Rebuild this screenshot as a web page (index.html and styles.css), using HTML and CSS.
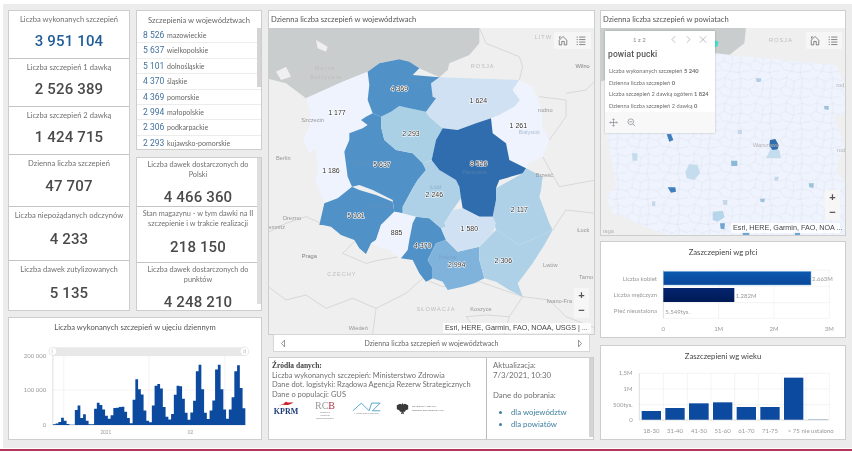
FILE: index.html
```html
<!DOCTYPE html>
<html lang="pl">
<head>
<meta charset="utf-8">
<title>Szczepienia</title>
<link rel="stylesheet" href="styles.css">
</head>
<body>
<main class="frame">
  <section class="leftblock">
    <div class="kpis">
      <div class="kpi h48"><h3>Liczba wykonanych szczepień</h3><strong class="blue">3 951 104</strong></div>
      <div class="kpi h49"><h3>Liczba szczepień 1 dawką</h3><strong>2 526 389</strong></div>
      <div class="kpi h48"><h3>Liczba szczepień 2 dawką</h3><strong>1 424 715</strong></div>
      <div class="kpi h52"><h3>Dzienna liczba szczepień</h3><strong>47 707</strong></div>
      <div class="kpi h55"><h3>Liczba niepożądanych odczynów</h3><strong>4 233</strong></div>
      <div class="kpi h49 last"><h3>Liczba dawek zutylizowanych</h3><strong>5 135</strong></div>
    </div>
    <div class="midcol">
      <div class="panel listpanel">
        <h3 class="listtitle">Szczepienia w województwach</h3>
        <ul class="vlist">
          <li><b>8 526</b> mazowieckie</li>
          <li><b>5 637</b> wielkopolskie</li>
          <li><b>5 101</b> dolnośląskie</li>
          <li><b>4 370</b> śląskie</li>
          <li><b>4 369</b> pomorskie</li>
          <li><b>2 994</b> małopolskie</li>
          <li><b>2 306</b> podkarpackie</li>
          <li><b>2 293</b> kujawsko-pomorskie</li>
        </ul>
        <span class="sbar listbar"></span>
      </div>
      <div class="panel supply">
        <div class="sitem s50"><h3>Liczba dawek dostarczonych do Polski</h3><strong>4 466 360</strong></div>
        <div class="sitem s56"><h3>Stan magazynu - w tym dawki na II szczepienie i w trakcie realizacji</h3><strong>218 150</strong></div>
        <div class="sitem s48"><h3>Liczba dawek dostarczonych do punktów</h3><strong>4 248 210</strong></div>
        <span class="sbar supplybar"></span>
      </div>
    </div>
    <div class="panel daily">
      <h3 class="charttitle">Liczba wykonanych szczepień w ujęciu dziennym</h3>
      <svg class="chart" viewBox="27 78 753 309" aria-label="Wykres dzienny">
        <line x1="157" y1="137" x2="735" y2="137" class="grid"/>
        <line x1="157" y1="240" x2="735" y2="240" class="grid"/>
        <line x1="190" y1="137" x2="190" y2="345" class="grid"/>
        <line x1="445" y1="137" x2="445" y2="345" class="grid"/>
        <line x1="673" y1="137" x2="673" y2="345" class="grid"/>
        <line x1="157" y1="137" x2="157" y2="345" class="axis"/>
        <line x1="157" y1="345" x2="735" y2="345" class="axis"/>
        <rect x="157" y="112" width="576" height="26" class="slider"/>
        <path class="bars" transform="translate(157,345) scale(8.25,-1.04)" d="M0 0V2H1V4H2V9H3V21H4V12H5V3H6V1H8V43H9V56H10V20H11V31H12V12H13V2H15V47H16V64H17V58H18V45H19V27H20V18H21V28H22V49H23V50H24V52H25V53H26V38H27V20H28V5H29V73H30V132H31V103H32V88H33V42H34V12H35V8H36V56H37V113H38V118H39V105H40V52H41V24H42V16H43V32H44V87H45V113H46V112H47V76H48V35H49V15H50V36H51V70H52V155H53V174H54V103H55V35H56V17H57V42H58V71H59V160H60V174H61V103H62V45H63V18H64V45H65V80H66V155H67V172H68V107H69V48H70V0Z"/>
        <circle cx="157" cy="124" r="12" class="handle"/>
        <circle cx="732" cy="124" r="13" class="handle"/>
        <line x1="155" y1="118" x2="155" y2="130" class="tick"/>
        <line x1="730" y1="118" x2="730" y2="130" class="tick"/>
        <line x1="735" y1="118" x2="735" y2="130" class="tick"/>
        <text x="137" y="143" class="ax end">200 000</text>
        <text x="137" y="246" class="ax end">100 000</text>
        <text x="137" y="351" class="ax end">0</text>
        <text x="316" y="372" class="ax mid small">2021</text>
        <text x="570" y="372" class="ax mid small">02</text>
      </svg>
    </div>
  </section>

  <section class="mapcol">
    <div class="panel mainmap">
      <h3 class="maptitle">Dzienna liczba szczepień w województwach</h3>
      <div class="mapbox">
        <svg class="mapsvg" viewBox="9 84 975 918" aria-label="Mapa województw">
          <rect x="9" y="84" width="975" height="918" class="land"/>
          <path class="sea" d="M0 84H640V130L610 165L550 190L545 210L520 232L460 205L430 185L400 178L340 190L305 215L230 245L120 295L60 250L0 235Z"/>
          <path class="isle" d="M150 120L185 140L180 155L155 145Z"/>
          <path class="isle" d="M30 215L60 200L75 230L45 240Z"/>
          <g class="border">
            <path d="M640 84L660 130L760 170L770 200L760 240"/>
            <path d="M850 420L900 350L900 300L820 290"/>
            <path d="M830 470L880 560L990 540"/>
            <path d="M990 240L960 270L900 280"/>
            <path d="M860 690L900 630L990 640"/>
            <path d="M770 890L730 950L715 1002"/>
            <path d="M0 700L60 670L120 650L165 670"/>
            <path d="M270 720L230 760L300 790L340 780L400 770"/>
            <path d="M0 855L60 900L120 885L180 925L260 895L330 925L320 1002"/>
            <path d="M470 835L420 880L330 925"/>
            <path d="M470 835L530 860L640 845L770 890"/>
            <path d="M640 1002L600 950L660 945L730 950"/>
            <path d="M770 890L850 900L900 950L990 985"/>
          </g>
          <path fill="#eef3fd" d="M305 215L310 255L305 300L320 340L300 350L285 360L305 375L290 385L250 400L150 445L130 460L110 420L130 380L135 340L120 295L230 245Z"/>
          <path fill="#eef3fd" d="M150 445L250 400L250 420L235 455L245 530L258 560L260 575L215 595L175 610L148 540L155 520Z"/>
          <path fill="#5092c8" d="M320 340L345 350L345 380L355 420L390 450L440 460L470 490L480 510L455 540L440 565L410 620L410 640L385 635L380 600L320 570L280 555L258 560L245 530L235 455L250 420L250 400L290 385L305 375L285 360L300 350Z"/>
          <path fill="#5092c8" d="M258 560L280 570L330 585L380 605L385 635L345 675L330 720L315 730L300 762L280 745L265 720L225 705L195 680L170 675L160 675L175 610L215 595Z"/>
          <path fill="#eef3fd" d="M385 635L410 640L450 650L440 670L430 720L425 750L400 775L370 750L345 745L315 730L330 720L345 675Z"/>
          <path fill="#5092c8" d="M450 650L490 655L525 685L540 720L510 730L485 780L500 805L500 835L480 845L460 820L440 780L405 775L425 750L430 720L440 670Z"/>
          <path fill="#80b3dc" d="M540 720L575 755L640 740L640 780L655 835L625 850L590 860L545 870L530 845L500 835L500 805L485 780L510 730Z"/>
          <path fill="#aed1e8" d="M640 740L690 690L760 735L860 690L835 735L800 790L755 850L770 890L730 870L690 845L655 835L640 780Z"/>
          <path fill="#aed1e8" d="M690 565L770 520L780 505L830 530L825 570L820 590L850 670L860 690L760 735L690 690L680 650L690 600Z"/>
          <path fill="#aed1e8" d="M470 490L500 480L520 510L570 540L580 560L585 595L560 630L535 670L540 680L525 685L490 655L450 650L410 640L410 620L440 565L455 540L480 510Z"/>
          <path fill="#aad0e6" d="M345 350L375 335L400 318L430 325L480 335L490 350L530 385L510 420L497 480L470 490L440 460L390 450L355 420L345 380Z"/>
          <path fill="#cfe1f2" d="M520 232L760 240L740 270L762 300L745 320L700 345L675 355L630 370L575 390L530 385L490 350L480 335L510 295L500 290L495 250Z"/>
          <path fill="#eef3fd" d="M760 240L800 260L820 310L830 340L830 380L850 420L830 470L790 490L780 505L730 480L720 430L680 400L675 355L700 345L745 320L762 300L740 270Z"/>
          <path fill="#2f6dae" d="M675 355L680 400L720 430L730 480L780 505L770 520L700 540L690 565L690 600L680 650L640 650L590 625L585 595L580 560L570 540L520 510L497 480L510 420L530 385L575 390L630 370Z"/>
          <path fill="#cfe1f2" d="M560 630L590 625L640 650L680 650L690 670L680 700L640 740L575 755L540 720L525 685L540 680L535 670Z"/>
          <path fill="#5092c8" d="M305 215L340 190L400 178L430 185L460 205L440 225L520 232L495 250L500 290L510 295L480 335L430 325L400 318L375 335L345 350L320 340L305 300L310 255Z"/>
          <g class="place">
            <text x="177" y="209" class="region">Morze</text>
            <text x="180" y="237" class="region">Bałtyckie</text>
            <text x="832" y="118" class="region">LITW</text>
            <text x="650" y="203" class="region">ROSJA</text>
            <text x="950" y="204" class="strong">Wilno</text>
            <text x="838" y="336">rodno</text>
            <text x="140" y="366">Szczecin</text>
            <text x="52" y="479">Berlin</text>
            <text x="835" y="531">Brześć</text>
            <text x="78" y="659">Drezno</text>
            <text x="32" y="686">emnitz</text>
            <text x="130" y="774" class="strong">Praga</text>
            <text x="228" y="829" class="region">CZECHY</text>
            <text x="952" y="696">Łuck</text>
            <text x="853" y="801">Lwów</text>
            <text x="960" y="836">Tarno</text>
            <text x="880" y="908">Iwano-Fra</text>
            <text x="510" y="932" class="region">SŁOWACJA</text>
            <text x="645" y="932">Koszyce</text>
            <text x="277" y="990">Wiedeń</text>
          </g>
          <g class="cityfaint">
            <text x="510" y="568">Łódź</text>
            <text x="545" y="777">Kraków</text>
            <text x="345" y="624">Wrocław</text>
            <text x="285" y="494">Poznań</text>
            <text x="625" y="522">Warszawa</text>
            <text x="790" y="402">Białystok</text>
            <text x="440" y="247">Gdańsk</text>
          </g>
          <g class="val">
            <text x="213" y="345">1 177</text>
            <text x="400" y="272">4 369</text>
            <text x="637" y="310">1 624</text>
            <text x="757" y="385">1 261</text>
            <text x="435" y="409">2 293</text>
            <text x="638" y="497">8 526</text>
            <text x="348" y="502">5 637</text>
            <text x="195" y="519">1 186</text>
            <text x="505" y="592">2 246</text>
            <text x="760" y="636">2 117</text>
            <text x="270" y="653">5 101</text>
            <text x="392" y="705">885</text>
            <text x="610" y="692">1 580</text>
            <text x="470" y="744">4 370</text>
            <text x="572" y="800">2 994</text>
            <text x="712" y="789">2 306</text>
          </g>
        </svg>
        <div class="tools maintools">
          <svg class="ico" viewBox="0 0 16 16"><path d="M8 1.5L2 7.5V15H6V9.5H10V15H14V7.5L8 1.5ZM2.5 2V5M2.5 2H4.5"/></svg>
          <svg class="ico" viewBox="0 0 16 16"><path d="M5 2.5H15M5 6.5H15M5 10.5H15M5 14.5H15M1 2.5H3M1 6.5H3M1 10.5H3M1 14.5H3"/></svg>
        </div>
        <div class="zoomer mainzoom"><span>+</span><span>−</span></div>
        <div class="attrib mainattr">Esri, HERE, Garmin, FAO, NOAA, USGS | ...</div>
      </div>
    </div>
    <div class="caption">
      <svg class="arrow" viewBox="0 0 8 12"><path d="M6 1.5L2 6L6 10.5Z"/></svg>
      <span>Dzienna liczba szczepień w województwach</span>
      <svg class="arrow" viewBox="0 0 8 12"><path d="M2 1.5L6 6L2 10.5Z"/></svg>
    </div>
    <div class="panel sources">
      <div class="srcleft">
        <p class="srchead">Źródła danych:</p>
        <p>Liczba wykonanych szczepień: Ministerstwo Zdrowia</p>
        <p>Dane dot. logistyki: Rządowa Agencja Rezerw Strategicznych</p>
        <p>Dane o populacji: GUS</p>
        <div class="logos">
          <div class="kprm">
            <svg viewBox="0 0 24 8" class="flag"><path d="M1 7C6 6 10 4 12 1C13 3 17 3 23 2C20 5 14 7 9 6C7 6 4 7 1 7Z"/></svg>
            <span>KPRM</span>
          </div>
          <div class="rcb"><span>RC<em>B</em></span><small>Rządowe Centrum Bezpieczeństwa</small></div>
          <div class="mz">
            <svg viewBox="0 0 34 12" class="zig"><path d="M1 11L11 2L20 11L23 2H33L24 11H33"/></svg>
            <small>Ministerstwo Zdrowia</small>
          </div>
          <div class="rars">
            <svg viewBox="0 0 16 16" class="eagle"><path d="M8 1L9 3L11 2L15 4L15 9L12 10L11 12L9 12L10 15L8 14L6 15L7 12L5 12L4 10L1 9L1 4L5 2L7 3Z"/></svg>
            <small>RZĄDOWA AGENCJA<br>REZERW STRATEGICZNYCH</small>
          </div>
        </div>
      </div>
      <div class="srcright">
        <p>Aktualizacja:</p>
        <p>7/3/2021, 10:30</p>
        <p class="dl">Dane do pobrania:</p>
        <ul>
          <li>dla województw</li>
          <li>dla powiatów</li>
        </ul>
        <span class="sbar srcbar"></span>
      </div>
    </div>
  </section>

  <section class="rightcol">
    <div class="panel rightmap">
      <h3 class="maptitle">Dzienna liczba szczepień w powiatach</h3>
      <div class="mapbox">
        <svg class="mapsvg" viewBox="15 84 732 621" aria-label="Mapa powiatów">
          <defs>
            <pattern id="pow" width="92" height="76" patternUnits="userSpaceOnUse">
              <path d="M0 12L20 4L42 16L66 6L92 14M20 4L16 30L0 38M16 30L40 42L42 16M40 42L66 34L66 6M66 34L92 42M40 42L34 62L10 58L0 38M34 62L20 76M34 62L60 66L66 34M60 66L64 76M60 66L92 60M20 0L20 4M66 0L66 6" fill="none" stroke="#d9dfe9" stroke-width="1.4"/>
            </pattern>
          </defs>
          <rect x="15" y="84" width="732" height="621" class="land"/>
          <path class="sea" d="M0 84H450L445 130L400 165L360 170L200 180L0 250Z"/>
          <path fill="#eff3fd" d="M150 180L360 160L450 170L720 195L745 250L750 340L715 350L745 440L720 510L760 570V720H250L150 680L50 640L30 590L60 560L45 470L30 400L40 280Z"/>
          <path fill="url(#pow)" d="M150 180L360 160L450 170L720 195L745 250L750 340L715 350L745 440L720 510L760 570V720H250L150 680L50 640L30 590L60 560L45 470L30 400L40 280Z"/>
          <path fill="#46e0cc" d="M350 118L368 125L364 140L350 140Z"/>
          <path fill="#c5dcef" d="M525 445L550 450L555 475L510 475Z"/>
          <path fill="#2f6dae" d="M522 420L538 417L548 435L545 448L530 450L520 438Z"/>
          <path fill="#c5dcef" d="M280 492L305 495L312 520L295 540L272 535L268 515Z"/>
          <path fill="#3f7fbe" d="M212 403L225 402L232 420L220 425Z"/>
          <path fill="#3f7fbe" d="M215 562L238 562L240 575L225 578Z"/>
          <path fill="#b7d5ea" d="M350 635L380 632L386 652L365 665L350 660Z"/>
          <path fill="#6fa5d0" d="M372 670L387 670L385 688L374 686Z"/>
          <path fill="#8db9d8" d="M405 482L424 482L424 498L406 498Z"/>
          <path fill="#c5dcef" d="M108 460L124 460L124 482L110 482Z"/>
          <path fill="#b0cde4" d="M480 235L496 235L494 246L482 246Z"/>
          <path fill="#9fc1dc" d="M684 318L698 318L698 330L686 328Z"/>
          <path fill="#9fc1dc" d="M638 550L654 550L652 564L640 562Z"/>
          <path fill="#9fc1dc" d="M492 596L507 596L505 607L494 606Z"/>
          <path fill="#c5d7e8" d="M380 600L394 600L394 614L382 614Z"/>
          <path fill="#c5d7e8" d="M168 604L178 604L178 618L168 618Z"/>
          <path fill="#c5d7e8" d="M425 390L438 390L438 402L425 402Z"/>
          <path fill="#c5d7e8" d="M535 530L548 530L546 542L536 542Z"/>
          <path fill="#6fa5d0" d="M440 695L460 695L460 708L440 708Z"/>
          <path fill="#6fa5d0" d="M597 695L612 695L612 708L597 708Z"/>
          <g class="place faintplace">
            <text x="555" y="127" class="region">ROSJA</text>
            <text x="733" y="262">rod</text>
            <text x="735" y="457">rod</text>
            <text x="37" y="700">raga</text>
            <text x="510" y="442">Warszawa</text>
          </g>
        </svg>
        <div class="popup">
          <div class="pophead">
            <span class="pagecount">1 z 2</span>
            <svg class="picon" viewBox="0 0 10 10"><path d="M6.5 1L2.5 5L6.5 9"/></svg>
            <svg class="picon" viewBox="0 0 10 10"><path d="M3.5 1L7.5 5L3.5 9"/></svg>
            <svg class="picon" viewBox="0 0 10 10"><path d="M1 1L9 9M9 1L1 9"/></svg>
          </div>
          <h4>powiat pucki</h4>
          <p>Liczba wykonanych szczepień <b>5 240</b></p>
          <p>Dzienna liczba szczepień <b>0</b></p>
          <p>Liczba szczepień 2 dawką ogółem <b>1 824</b></p>
          <p>Dzienna liczba szczepień 2 dawką <b>0</b></p>
          <div class="popfoot">
            <svg class="picon big" viewBox="0 0 12 12"><path d="M6 1V11M1 6H11M6 1L4.5 2.5M6 1L7.5 2.5M6 11L4.5 9.5M6 11L7.5 9.5M1 6L2.5 4.5M1 6L2.5 7.5M11 6L9.5 4.5M11 6L9.5 7.5"/></svg>
            <svg class="picon big" viewBox="0 0 12 12"><circle cx="5" cy="5" r="3.8"/><path d="M8 8L11 11M3 5H7"/></svg>
          </div>
        </div>
        <div class="tools righttools">
          <svg class="ico" viewBox="0 0 16 16"><path d="M8 1.5L2 7.5V15H6V9.5H10V15H14V7.5L8 1.5ZM2.5 2V5M2.5 2H4.5"/></svg>
          <svg class="ico" viewBox="0 0 16 16"><path d="M5 2.5H15M5 6.5H15M5 10.5H15M5 14.5H15M1 2.5H3M1 6.5H3M1 10.5H3M1 14.5H3"/></svg>
        </div>
        <div class="zoomer rightzoom"><span>+</span><span>−</span></div>
        <div class="attrib rightattr">Esri, HERE, Garmin, FAO, NOA ...</div>
      </div>
    </div>
    <div class="panel gender">
      <h3 class="charttitle tall">Zaszczepieni wg płci</h3>
      <svg class="chart" viewBox="15 87 732 219" aria-label="Płeć">
        <defs>
          <linearGradient id="gb" x1="0" y1="0" x2="0" y2="1"><stop offset="0" stop-color="#0a5ab0"/><stop offset="1" stop-color="#0a479a"/></linearGradient>
          <linearGradient id="gd" x1="0" y1="0" x2="0" y2="1"><stop offset="0" stop-color="#03246e"/><stop offset="1" stop-color="#001a56"/></linearGradient>
        </defs>
        <line x1="368" y1="105" x2="368" y2="250" class="grid"/>
        <line x1="534" y1="105" x2="534" y2="250" class="grid"/>
        <line x1="700" y1="105" x2="700" y2="250" class="grid"/>
        <line x1="202" y1="105" x2="700" y2="105" class="grid"/>
        <line x1="202" y1="154" x2="700" y2="154" class="grid"/>
        <line x1="202" y1="203" x2="700" y2="203" class="grid"/>
        <line x1="202" y1="250" x2="700" y2="250" class="grid"/>
        <line x1="202" y1="105" x2="202" y2="250" class="axis"/>
        <rect x="202" y="109" width="443" height="41" fill="url(#gb)" stroke="#7fb8e0" stroke-width="1.5"/>
        <rect x="202" y="159" width="213" height="42" fill="url(#gd)"/>
        <text x="183" y="137" class="ax end">Liczba kobiet</text>
        <text x="183" y="186" class="ax end">Liczba mężczyzn</text>
        <text x="183" y="234" class="ax end">Płeć nieustalona</text>
        <text x="648" y="139" class="ax">2.663M</text>
        <text x="419" y="188" class="ax">1.282M</text>
        <text x="208" y="236" class="ax">5.549tys.</text>
        <text x="202" y="289" class="ax mid">0</text>
        <text x="368" y="289" class="ax mid">1M</text>
        <text x="534" y="289" class="ax mid">2M</text>
        <text x="700" y="289" class="ax mid">3M</text>
      </svg>
    </div>
    <div class="panel age">
      <h3 class="charttitle tall">Zaszczepieni wg wieku</h3>
      <svg class="chart" viewBox="15 399 732 213" aria-label="Wiek">
        <line x1="130" y1="415" x2="700" y2="415" class="grid"/>
        <line x1="130" y1="462" x2="700" y2="462" class="grid"/>
        <line x1="130" y1="509" x2="700" y2="509" class="grid"/>
        <line x1="202" y1="415" x2="202" y2="555" class="grid"/>
        <line x1="274" y1="415" x2="274" y2="555" class="grid"/>
        <line x1="345" y1="415" x2="345" y2="555" class="grid"/>
        <line x1="416" y1="415" x2="416" y2="555" class="grid"/>
        <line x1="487" y1="415" x2="487" y2="555" class="grid"/>
        <line x1="558" y1="415" x2="558" y2="555" class="grid"/>
        <line x1="630" y1="415" x2="630" y2="555" class="grid"/>
        <line x1="700" y1="415" x2="700" y2="555" class="grid"/>
        <line x1="130" y1="415" x2="130" y2="555" class="axis"/>
        <g class="agebars">
          <rect x="137" y="528" width="58" height="27"/>
          <rect x="208" y="519" width="58" height="36"/>
          <rect x="279" y="505" width="59" height="50"/>
          <rect x="351" y="502" width="58" height="53"/>
          <rect x="422" y="516" width="58" height="39"/>
          <rect x="493" y="516" width="58" height="39"/>
          <rect x="564" y="428" width="58" height="127"/>
          <rect x="636" y="554" width="59" height="1"/>
        </g>
        <line x1="130" y1="555" x2="700" y2="555" class="axis"/>
        <text x="110" y="421" class="ax end">1,5M</text>
        <text x="110" y="468" class="ax end">1M</text>
        <text x="110" y="515" class="ax end">500tys.</text>
        <text x="110" y="562" class="ax end">0</text>
        <text x="166" y="593" class="ax mid">18-30</text>
        <text x="237" y="593" class="ax mid">31-40</text>
        <text x="309" y="593" class="ax mid">41-50</text>
        <text x="380" y="593" class="ax mid">51-60</text>
        <text x="451" y="593" class="ax mid">61-70</text>
        <text x="522" y="593" class="ax mid">71-75</text>
        <text x="593" y="593" class="ax mid">&gt; 75</text>
        <text x="665" y="593" class="ax mid">nie ustalono</text>
      </svg>
    </div>
  </section>
</main>
<div class="redline"></div>
</body>
</html>
```

FILE: styles.css
```css
* { box-sizing: border-box; margin: 0; padding: 0; }
html, body { width: 852px; height: 452px; overflow: hidden; background: #fff; }
body { padding-top: 4px; padding-left: 3px; font-family: Lato, "Liberation Sans", sans-serif; color: #555; }

.frame {
  width: 849px; height: 444px;
  background: #ececec;
  padding: 6px 0 0 5px;
  display: flex;
  gap: 6px;
  filter: blur(.5px);
}
.redline { height: 2px; margin: 1px 0 0 -3px; width: 852px; background: #b4345a; }

h3, h4 { font-weight: 400; }
.panel { background: #fff; border: 1px solid #cdcdcd; position: relative; }

.leftblock {
  width: 254px; height: 430px;
  display: grid;
  grid-template-columns: 122px 126px;
  grid-template-rows: 301px 123px;
  column-gap: 6px; row-gap: 6px;
}
.kpis { background: #fff; border: 1px solid #cdcdcd; display: flex; flex-direction: column; }
.kpi { border-bottom: 1px solid #c4c4c4; text-align: center; display: flex; flex-direction: column; }
.kpi.last { border-bottom: 0; }
.h48 { height: 48px; } .h49 { height: 49px; } .h52 { height: 52px; } .h55 { height: 55px; }
.kpi h3, .sitem h3 { font-size: 7.6px; line-height: 10px; color: #707070; padding-top: 2px; }
.kpi h3 { padding-top: 3px; white-space: nowrap; }
.kpi strong, .sitem strong {
  font-family: Roboto, "Liberation Sans", sans-serif;
  font-weight: 500; font-size: 15px; letter-spacing: .15px; color: #4a4a4a; line-height: 18px;
}
.kpi strong { margin-top: 8px; }
.kpi.h52 strong { margin-top: 9px; }
.kpi.h55 strong { margin-top: 10px; }
.kpi.last strong { margin-top: 10px; }
.kpi strong.blue { color: #1f5c98; }

.midcol { display: flex; flex-direction: column; gap: 7px; }
.listpanel { height: 140px; overflow: hidden; }
.listtitle { height: 17px; line-height: 18px; font-size: 7.6px; text-align: center; color: #666; white-space: nowrap; }
.vlist { list-style: none; }
.vlist li {
  height: 15.4px; line-height: 15px; padding-left: 6px;
  border-bottom: 1px solid #ececec;
  font-size: 7px; color: #666; white-space: nowrap;
}
.vlist b { font-family: Roboto, sans-serif; font-weight: 400; font-size: 8.5px; color: #41709e; margin-right: 1px; }
.sbar { position: absolute; right: 0; width: 4px; background: #d4d4d4; }
.listbar { top: 17px; height: 59px; }

.supply { height: 154px; overflow: hidden; }
.sitem { text-align: center; border-bottom: 1px solid #c4c4c4; padding: 0 5px 0 3px; display: flex; flex-direction: column; overflow: hidden; }
.sitem h3 { font-size: 7.3px; }
.s50 { height: 49px; } .s56 { height: 56px; } .s48 { height: 47px; border-bottom: 0; }
.s50 strong { margin-top: 8px; }
.s56 strong { margin-top: 9px; }
.s48 strong { margin-top: 10px; line-height: 14px; }
.supplybar { top: 0; bottom: 6px; background: #dedede; }

.daily { grid-column: 1 / span 2; }
.charttitle { height: 18px; line-height: 18px; font-size: 7.6px; text-align: center; color: #555; white-space: nowrap; }
.charttitle.tall { height: 22px; line-height: 21px; font-size: 7.7px; color: #444; }
.chart { display: block; width: 100%; }
.daily .chart { height: 103px; }
.gender .chart { height: 73px; }
.age .chart { height: 71px; }
.grid { stroke: #e9e9e9; stroke-width: 1.5; }
.axis { stroke: #cfcfcf; stroke-width: 2; }
.slider { fill: #e8e8e8; }
.handle { fill: #fff; stroke: #dcdcdc; stroke-width: 2; }
.tick { stroke: #aaa; stroke-width: 1.5; }
.bars { fill: #0b4a9e; }
.agebars rect { fill: #0b4a9e; }
.ax { font-family: Lato, sans-serif; font-size: 18px; fill: #999; }
.ax.small { font-size: 14px; }
.end { text-anchor: end; }
.mid { text-anchor: middle; }

.mapcol { width: 327px; height: 430px; display: flex; flex-direction: column; }
.mainmap { height: 325px; }
.maptitle { height: 17px; line-height: 17px; padding-left: 2px; font-size: 7.6px; color: #555; white-space: nowrap; }
.mapbox { position: relative; overflow: hidden; }
.mainmap .mapbox { height: 306px; }
.rightmap .mapbox { height: 207px; }
.mapsvg { display: block; width: 100%; height: 100%; }
.land { fill: #efefef; }
.sea { fill: #cacdcd; }
.isle { fill: #efefef; }
.border path { fill: none; stroke: #d8d8d8; stroke-width: 3; }
.place text { font-family: "Liberation Sans", sans-serif; font-size: 17px; fill: #979797; text-anchor: middle; }
.place .region { fill: #bdbdbd; letter-spacing: 3px; }
.place .strong { fill: #808080; }
.faintplace text { fill: #b4b4b4; }
.cityfaint text { font-family: "Liberation Sans", sans-serif; font-size: 16px; fill: #6f8fae; opacity: .5; text-anchor: middle; }
.val text {
  font-family: "Liberation Sans", sans-serif; font-size: 21px; fill: #333; text-anchor: middle;
  paint-order: stroke; stroke: #fff; stroke-width: 3.5px;
}

.tools { position: absolute; top: 4px; display: flex; background: #f6f6f6; padding: 3px 4px; gap: 8px; }
.maintools { right: 3px; width: 37px; height: 17px; }
.righttools { right: 3px; width: 36px; height: 17px; }
.ico { width: 10px; height: 11px; fill: none; stroke: #555; stroke-width: 1.1; }
.zoomer {
  position: absolute; width: 15px; height: 30px; background: #f6f6f6;
  display: flex; flex-direction: column; align-items: center;
  font-family: "Liberation Sans", sans-serif; font-size: 11px; line-height: 15px; color: #555; font-weight: 700;
}
.mainzoom { right: 5px; bottom: 16px; }
.rightzoom { right: 5px; bottom: 15px; }
.attrib {
  position: absolute; background: rgba(255,255,255,.85);
  font-family: "Liberation Sans", sans-serif; font-size: 7.2px; line-height: 10px; color: #444; white-space: nowrap; padding-left: 2px;
}
.mainattr { right: 3px; bottom: 1px; width: 148px; }
.rightattr { right: 5px; bottom: 2px; width: 109px; }

.caption {
  margin: -1px 5px 0 5px; height: 18px; flex: none;
  background: #fff; border: 1px solid #d6d6d6;
  display: flex; align-items: center; justify-content: space-between; padding: 0 6px;
  font-size: 7px; color: #666; position: relative;
}
.arrow { width: 6px; height: 9px; fill: none; stroke: #777; stroke-width: 1; }

.sources { margin-top: 5px; width: 326px; height: 83px; display: flex; flex: none; }
.srcleft { width: 217px; padding: 3px 0 0 3px; font-size: 7.5px; line-height: 9.5px; color: #707070; white-space: nowrap; }
.srchead { font-family: "Liberation Serif", serif; font-weight: 700; color: #444; }
.logos { display: flex; align-items: flex-start; margin-top: 1px; padding-left: 0; }
.kprm { width: 28px; display: flex; flex-direction: column; align-items: center; }
.flag { width: 16px; height: 7px; fill: #c8202c; }
.kprm span { font-family: "Liberation Serif", serif; font-weight: 700; font-size: 8px; line-height: 9px; color: #1e3a78; }
.rcb { width: 50px; display: flex; flex-direction: column; align-items: center; padding-top: 1px; }
.rcb span { font-family: "Liberation Serif", serif; font-size: 10px; line-height: 10px; color: #999; }
.rcb em { font-style: normal; color: #b03040; }
.rcb small, .mz small, .rars small { font-size: 2.5px; line-height: 3px; color: #888; }
.rcb small { width: 20px; text-align: center; white-space: normal; }
.mz { width: 29px; display: flex; flex-direction: column; align-items: center; margin-left: 2px; padding-top: 1px; }
.zig { width: 29px; height: 11px; fill: none; stroke: #3a9ac4; stroke-width: 1; }
.rars { display: flex; align-items: center; margin-left: 15px; gap: 3px; }
.eagle { width: 13px; height: 17px; fill: #3a3a3a; }
.rars small { line-height: 3.5px; color: #666; }

.srcright { position: relative; flex: 1; border-left: 1px solid #bbb; padding: 3px 0 0 6px; font-size: 7.8px; line-height: 9.5px; color: #707070; white-space: nowrap; }
.srcright .dl { margin-top: 9px; line-height: 12px; }
.srcright ul { margin: 5px 0 0 18px; color: #3f7f9f; line-height: 12px; }
.srcbar { top: 0; bottom: 2px; }

.rightcol { width: 246px; height: 430px; display: flex; flex-direction: column; margin-left: -1px; }
.rightmap { height: 226px; }
.gender { height: 97px; margin-top: 5px; }
.age { height: 95px; margin-top: 7px; }

.popup {
  position: absolute; left: 4px; top: 3px; width: 110px; height: 102px;
  background: #fff; box-shadow: 0 0 2px rgba(0,0,0,.25);
  font-size: 5.7px; color: #707070; white-space: nowrap;
}
.pophead { height: 11px; display: flex; align-items: center; padding: 1px 7px 0 28px; gap: 6.5px; color: #888; margin-top: 2px; }
.pagecount { width: 22px; font-size: 6px; margin-right: 8px; }
.picon { width: 8px; height: 9px; fill: none; stroke: #999; stroke-width: .8; flex: none; }
.popup h4 { font-size: 8.5px; font-weight: 500; font-family: Roboto, sans-serif; color: #555; margin: 4px 0 5px 3px; line-height: 12px; letter-spacing: .1px; }
.popup p { padding-left: 4px; height: 11.7px; line-height: 11px; }
.popup b { font-weight: 700; }
.popfoot { position: absolute; left: 0; right: 0; bottom: 0; height: 21px; background: #f8f8f8; display: flex; align-items: center; padding-left: 4px; gap: 9px; }
.picon.big { width: 9px; height: 9px; stroke: #778; }
```
